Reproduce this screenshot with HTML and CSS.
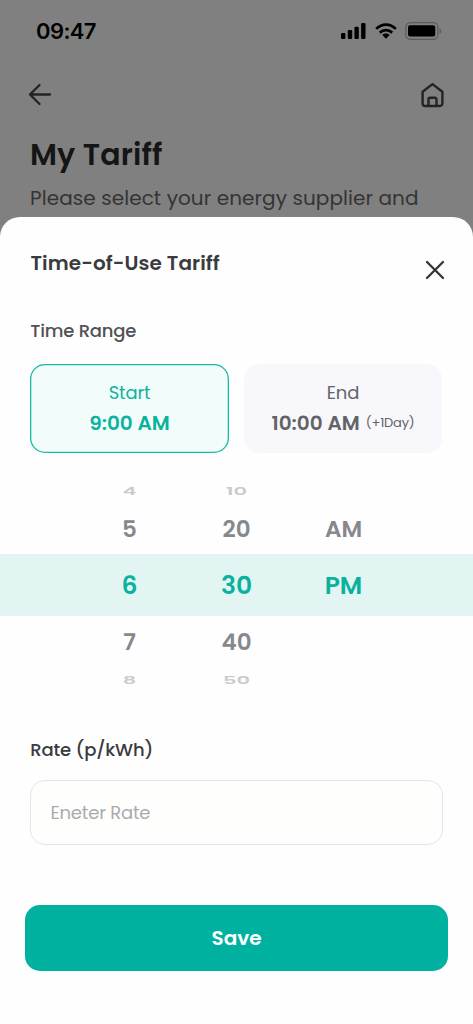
FILE: index.html
```html
<!DOCTYPE html>
<html lang="en">
<head>
<meta charset="utf-8">
<meta name="viewport" content="width=device-width, initial-scale=1">
<title>My Tariff</title>
<link rel="stylesheet" href="styles.css">
</head>
<body>
<div class="phone">
  <div class="screen">
    <div class="status">
      <span class="clock">09:47</span>
      <div class="status-icons">
        <svg width="25" height="16" viewBox="0 0 25 16"><rect x="0" y="10" width="4.4" height="6" rx="1.2"/><rect x="6.8" y="7" width="4.4" height="9" rx="1.2"/><rect x="13.4" y="3.8" width="4.4" height="12.2" rx="1.2"/><rect x="20.1" y="0" width="4.4" height="16" rx="1.2"/></svg>
        <svg width="22" height="16" viewBox="0 0 22 16"><path fill="none" stroke="#000" stroke-width="2.8" d="M1.2 5.9C6.7.2 15.300.2 20.800 5.900M4.800 9.600c3.600-3.300 8.800-3.300 12.400 0"/><path d="M7.300 12c2.200-1.900 5.200-1.900 7.400 0L11 15.800z"/></svg>
        <svg width="37" height="18" viewBox="0 0 37 18"><rect x=".7" y=".7" width="32.200" height="16.600" rx="4.600" fill="none" stroke="#5c5c5c" stroke-width="1.200"/><rect x="3" y="3.200" width="27.200" height="11.400" rx="2"/><path fill="#5c5c5c" d="M34.500 6.200c2.300.9 2.300 4.800 0 5.700z"/></svg>
      </div>
    </div>
    <div class="nav">
      <svg width="24" height="24" viewBox="0 0 24 24" fill="none" stroke="#232323" stroke-width="2.300" stroke-linecap="round" stroke-linejoin="round"><path d="M22 11.500H2M11.500 2L2 11.500l9.500 9.500"/></svg>
      <svg width="24" height="26" viewBox="0 0 24 26" fill="none" stroke="#232323" stroke-width="2.400" stroke-linejoin="round"><path d="M1.600 9.800L11.500 2.100l9.900 7.700v11.700a2.500 2.500 0 0 1-2.500 2.500H4.100a2.500 2.500 0 0 1-2.500-2.500z"/><path d="M7.500 24v-6.700a1.500 1.500 0 0 1 1.500-1.500h5a1.500 1.500 0 0 1 1.500 1.500V24"/></svg>
    </div>
    <h1 class="page-title"><span>My Tariff</span></h1>
    <p class="page-text"><span>Please select your energy supplier and</span></p>
  </div>
  <section class="sheet">
    <div class="sheet-head">
      <h2 class="sheet-title"><span>Time-of-Use Tariff</span></h2>
      <svg class="close" width="20" height="20" viewBox="0 0 20 20" fill="none" stroke="#333538" stroke-width="2.300" stroke-linecap="round"><path d="M2 2l16 16M18 2L2 18"/></svg>
    </div>
    <div class="label range-label"><span>Time Range</span></div>
    <div class="ranges">
      <div class="range active"><div class="range-name start">Start</div><div class="range-time"><b>9:00 AM</b></div></div>
      <div class="range"><div class="range-name end">End</div><div class="range-time"><b>10:00 AM</b><small>(+1Day)</small></div></div>
    </div>
    <div class="picker">
      <div class="row far"><span>4</span><span>10</span><span></span></div>
      <div class="row near"><span>5</span><span>20</span><span>AM</span></div>
      <div class="row current"><span>6</span><span>30</span><span>PM</span></div>
      <div class="row near below"><span>7</span><span>40</span><span></span></div>
      <div class="row far"><span>8</span><span>50</span><span></span></div>
    </div>
    <div class="label rate-label"><span>Rate (p/kWh)</span></div>
    <div class="field"><span>Eneter Rate</span></div>
    <div class="save"><span>Save</span></div>
  </section>
</div>
</body>
</html>
```
FILE: styles.css
```css
* { box-sizing: border-box; }
body {
  margin: 0;
  background: #808080;
  font-family: Poppins, Inter, "Open Sans", sans-serif;
  font-feature-settings: "cv11" 1;
}
.phone { position: relative; width: 473px; height: 1024px; overflow: hidden; }
h1, h2, p { margin: 0; }
svg { display: block; flex: none; }
span, b, small { white-space: nowrap; }

.status { height: 62px; padding: 0 31px 0 36px; display: flex; align-items: center; justify-content: space-between; }
.clock { font: 600 22px/30px Inter, sans-serif; letter-spacing: -0.6px; }
.status-icons { display: flex; align-items: center; gap: 8.500px; }
.nav { height: 66px; padding: 0 28px; display: flex; align-items: center; justify-content: space-between; }
.page-title { margin-top: 6px; padding-left: 30px; font-size: 30px; line-height: 41px; font-weight: 600; color: #151515; letter-spacing: 0.15px; }
.page-text { margin-top: 8px; padding-left: 30px; font-size: 20px; line-height: 30px; color: #343434; letter-spacing: 0.08px; }

.sheet { position: absolute; left: 0; right: 0; top: 217px; bottom: 0; background: #fefefe; border-radius: 20px 20px 0 0; padding-top: 31px; }
.sheet-head { height: 44px; padding: 0 28px 0 30.500px; display: flex; justify-content: space-between; }
.sheet-title { font-size: 20px; line-height: 30px; font-weight: 600; color: #3a3b3e; letter-spacing: 0.08px; }
.close { margin-top: 12px; }
.label { padding-left: 30.300px; font-size: 18px; line-height: 26px; font-weight: 500; letter-spacing: -0.2px; }
.range-label { margin-top: 26px; color: #515256; }
.ranges { margin-top: 20px; padding: 0 30px; display: grid; grid-template-columns: 199px 198px; column-gap: 15px; }
.range { height: 89px; border-radius: 15px; background: #f7f7fc; color: #626366; padding-top: 15px; text-align: center; }
.range.active { background: #f2fdfb; color: #0bb39f; box-shadow: inset 0 0 0 1.3px #19b9a7; }
.range-name { font-size: 18px; line-height: 28px; letter-spacing: -0.2px; }
.range-time { display: flex; justify-content: center; gap: 6px; font-size: 20px; line-height: 32px; }
.range-time b { font-weight: 600; }
.range-time small { font-size: 13px; letter-spacing: -0.2px; }

.picker { margin-top: 24px; }
.row { display: grid; grid-template-columns: 107px 107px 107px; padding-left: 76px; text-align: center; font-weight: 600; }
.far { height: 27px; line-height: 28px; font-size: 21px; color: #cbcbcd; }
.far span { transform: translateY(0.5px) scaleY(0.5); }
.near { height: 50px; line-height: 50px; font-size: 23px; color: #87888b; }
.near.below { line-height: 52px; }
.current { height: 62px; line-height: 63px; font-size: 25px; color: #08b29f; background: #e3f5f3; }
.rate-label { margin-top: 44px; color: #3a3b3e; letter-spacing: -0.17px; }
.field { margin: 17px 30px 0 30px; height: 65px; border: 1.3px solid #e2e5ec; border-radius: 15px; padding-left: 19.500px; font-size: 18px; line-height: 63px; color: #aaaaae; background: #fefefd; letter-spacing: -0.2px; }
.save { margin: 60px 25px 0; height: 66px; border-radius: 15px; background: #00b1a0; color: #fff; text-align: center; font-size: 20px; font-weight: 600; line-height: 67px; }
```
